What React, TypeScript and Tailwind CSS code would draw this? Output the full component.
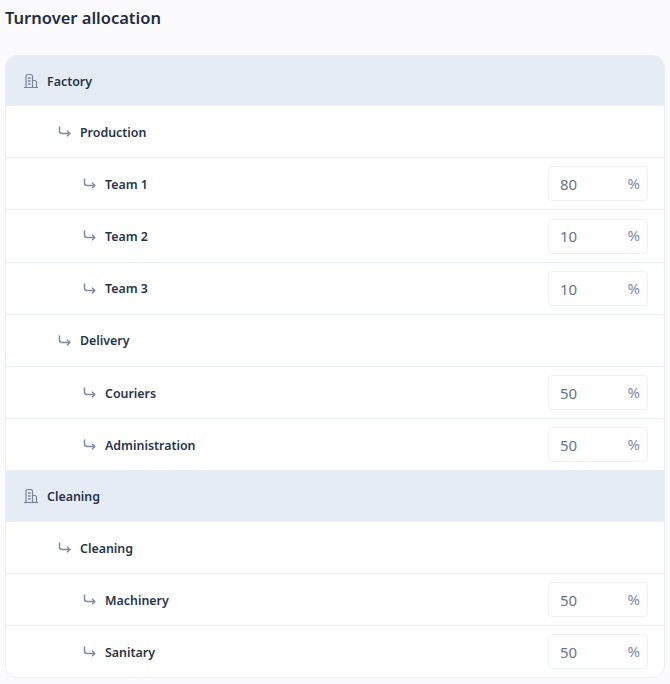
const BuildingIcon = () => (
  <svg width="16" height="16" viewBox="0 0 16 16" fill="none" stroke="#76849c" strokeWidth="1.200" className="shrink-0">
    <path d="M1 14.500h14" />
    <path d="M3 14.500V3.500q0-2 2-2h2.500q2 0 2 2v11" />
    <path d="M9.500 7.500h2q2 0 2 2v5" />
    <path d="M5 5h2.500M5 8h2.500M5 11h2.500" strokeWidth="1.400" />
  </svg>
);

const ArrowIcon = () => (
  <svg width="14" height="14" viewBox="0 0 14 14" fill="none" stroke="#7d8ba3" strokeWidth="1.500" className="shrink-0">
    <path d="M1.500 1.500v4.500q0 2.500 2.500 2.500h7.500" />
    <path d="M9 5.700l2.800 2.800-2.800 2.800" />
  </svg>
);

const PercentInput = ({ value }: { value: string }) => (
  <div className="ml-auto flex h-[35px] w-[100px] items-center justify-between rounded-[4px] border border-[#edf0f5] bg-white pl-[11px] pr-[7px] font-normal">
    <span className="text-[15px] leading-[22px] text-[#66758a]">{value}</span>
    <span className="mb-[2px] text-[15px] leading-[22px] text-[#7d8ba3]">%</span>
  </div>
);

const GroupRow = ({ label, first }: { label: string; first?: boolean }) => (
  <div className={first ? "flex h-[49px] items-center gap-[8px] bg-[#e5ecf5] pl-[17px]" : "flex h-[51px] items-center gap-[8px] bg-[#e5ecf5] pl-[17px]"}>
    <BuildingIcon />
    <span className="pt-[2px]">{label}</span>
  </div>
);

const SectionRow = ({ label, low }: { label: string; low?: boolean }) => (
  <div className="flex h-[52px] items-center gap-[8px] border-t border-[#e9edf4] pl-[52px]">
    <ArrowIcon />
    <span className={low ? "pt-[2px]" : ""}>{label}</span>
  </div>
);

const ItemRow = ({ label, value, low, tall }: { label: string; value: string; low?: boolean; tall?: boolean }) => (
  <div className={tall ? "flex h-[53px] items-center gap-[8px] border-t border-[#e9edf4] pl-[77px] pr-[16px]" : "flex h-[52px] items-center gap-[8px] border-t border-[#e9edf4] pl-[77px] pr-[16px]"}>
    <ArrowIcon />
    <span className={low ? "pt-[2px]" : ""}>{label}</span>
    <PercentInput value={value} />
  </div>
);

export default function App() {
  return (
    <div className="h-[684px] w-[670px] overflow-hidden bg-[#fbfbfd] pl-[5px] pr-[5px] font-['Noto_Sans',sans-serif]">
      <h1 className="pt-[7px] text-[16.500px] leading-[22px] font-semibold text-[#1f2d42]">Turnover allocation</h1>
      <div className="mt-[26px] overflow-hidden rounded-[12px] border border-[#e9edf4] bg-white text-[12.400px] leading-[19px] font-semibold text-[#27344a]">
        <GroupRow label="Factory" first />
        <SectionRow label="Production" low />
        <ItemRow label="Team 1" value="80" low />
        <ItemRow label="Team 2" value="10" tall />
        <ItemRow label="Team 3" value="10" />
        <SectionRow label="Delivery" />
        <ItemRow label="Couriers" value="50" low />
        <ItemRow label="Administration" value="50" low />
        <GroupRow label="Cleaning" />
        <SectionRow label="Cleaning" low />
        <ItemRow label="Machinery" value="50" low />
        <ItemRow label="Sanitary" value="50" low />
      </div>
    </div>
  );
}
